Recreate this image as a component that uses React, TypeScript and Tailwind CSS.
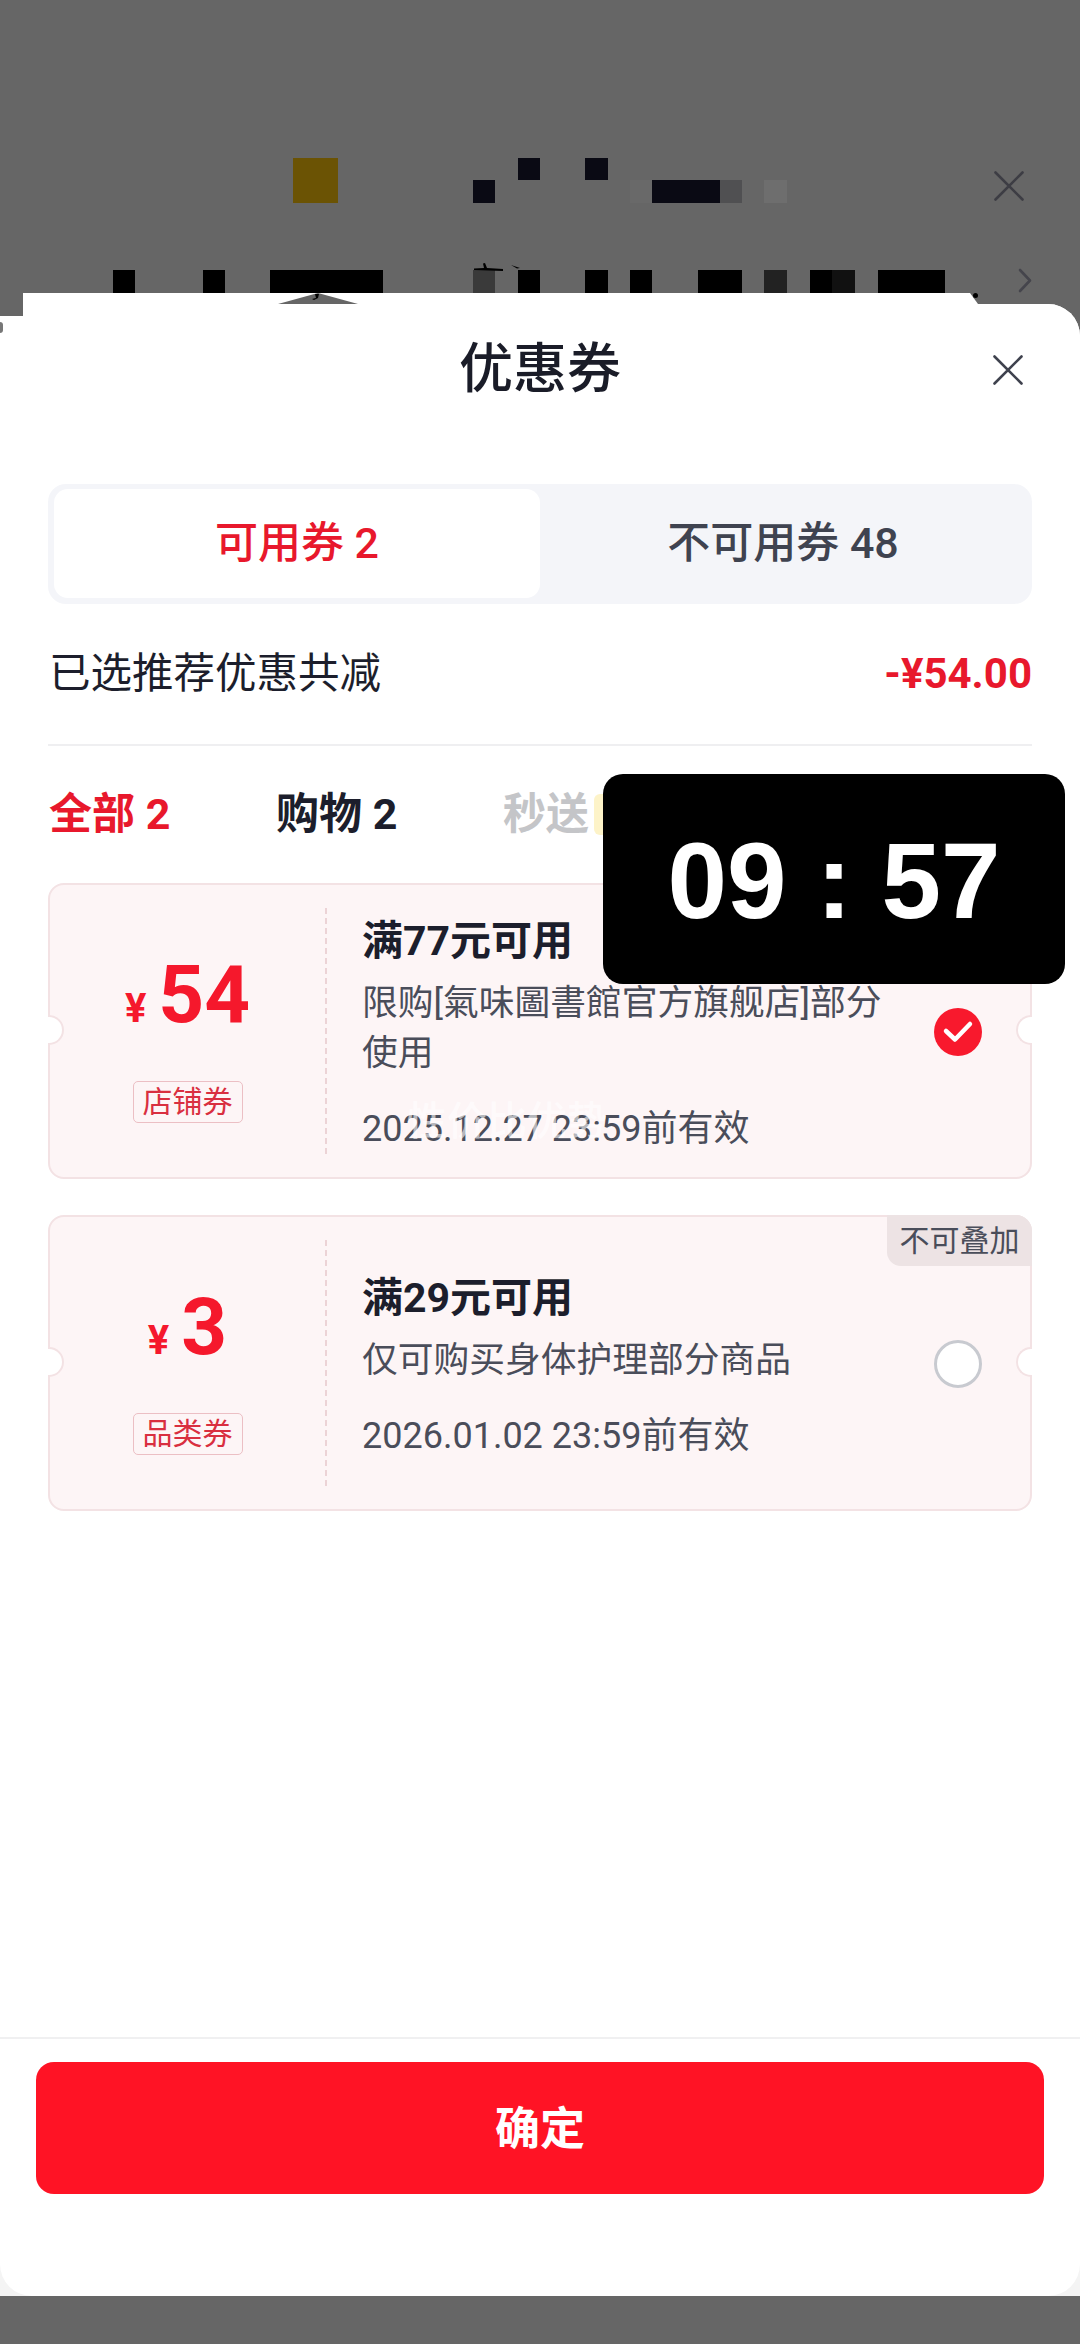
interface Coupon {
    id: string;
    amount: string;
    tag: string;
    title: string;
    lines: string[];
    expires: string;
    selected: boolean;
    noStack: boolean;
}

const coupons: Coupon[] = [
    {
        id: "1",
        amount: "54",
        tag: "店铺券",
        title: "满77元可用",
        lines: ["限购[氣味圖書館官方旗舰店]部分", "使用"],
        expires: "2025.12.27 23:59前有效",
        selected: true,
        noStack: false,
    },
    {
        id: "2",
        amount: "3",
        tag: "品类券",
        title: "满29元可用",
        lines: ["仅可购买身体护理部分商品"],
        expires: "2026.01.02 23:59前有效",
        selected: false,
        noStack: true,
    },
];

const CloseIcon = ({ color }: { color: string }) => (
    <svg width="30" height="30" viewBox="0 0 30 30" fill="none" stroke={color} strokeWidth="2.6" strokeLinecap="round">
        <path d="M1.5 1.5L28.5 28.5M28.5 1.5L1.5 28.5" />
    </svg>
);

const CouponCard = ({ coupon }: { coupon: Coupon }) => (
    <div className="relative flex h-[296px] rounded-[16px] border-2 border-[#f3e2e4] bg-[#fdf5f6]">
        {/* ticket notches */}
        <div className="absolute left-[-2px] top-[130px] h-[30px] w-[16px] rounded-r-full border-2 border-l-0 border-[#f3e2e4] bg-white"></div>
        <div className="absolute right-[-2px] top-[130px] h-[30px] w-[16px] rounded-l-full border-2 border-r-0 border-[#f3e2e4] bg-white"></div>

        {coupon.noStack && (
            <div className="absolute right-[-2px] top-[-2px] flex h-[51px] w-[145px] items-center justify-center rounded-bl-[14px] rounded-tr-[16px] bg-[#ede3e4] text-[30px] leading-none text-[#4a4d5a]">
                不可叠加
            </div>
        )}

        {/* Amount column */}
        <div className="flex w-[275px] flex-col items-center pt-[80px]">
            <div className="flex h-[96px] items-end gap-[12px] pb-[34px] font-bold leading-none text-[#f5182c]">
                <span className="text-[40px] leading-[36px]">¥</span>
                <span className="text-[80px] leading-[64px]">{coupon.amount}</span>
            </div>
            <div className="mt-[20px] flex h-[42px] w-[110px] items-center justify-center rounded-[5px] border border-[#ecbfc4] text-[30px] leading-none text-[#d92f40]">
                {coupon.tag}
            </div>
        </div>

        <div className="my-[23px] border-l-2 border-dashed border-[#ecd3d6]"></div>

        {/* Text column */}
        <div className="flex flex-1 flex-col justify-center pl-[35px] pt-[8px]">
            <div className="text-[41px] font-bold leading-[50px] text-[#1c1e2c]">{coupon.title}</div>
            <div className="mt-[12px] text-[35.75px] leading-[50px] text-[#4a4d5a]">
                {coupon.lines.map((line) => (
                    <div key={line}>{line}</div>
                ))}
            </div>
            <div className="mt-[26px] text-[36px] leading-[50px] text-[#4a4d5a]">{coupon.expires}</div>
        </div>

        {/* Radio */}
        <div className="mr-[48px] flex items-center pt-[2px]">
            {coupon.selected ? (
                <svg width="48" height="48" viewBox="0 0 48 48" fill="none">
                    <circle cx="24" cy="24" r="24" fill="#f8192d" />
                    <path d="M12 23L21 31.5L36 16" stroke="#fff" strokeWidth="4.5" strokeLinecap="round" strokeLinejoin="round" />
                </svg>
            ) : (
                <div className="h-[48px] w-[48px] rounded-full border-[3px] border-[#c8cad0] bg-white"></div>
            )}
        </div>
    </div>
);

export default function App() {
    return (
        <div className="relative flex h-[2344px] w-[1080px] flex-col overflow-hidden bg-[#666666] [font-family:Roboto,'Noto_Sans_CJK_SC',sans-serif]">
            {/* Mosaic page behind the sheet */}
            <div className="h-[293px] pt-[158px]">
                <div className="flex h-[45px] items-center">
                    <div className="w-[994px]">
                        <div className="flex h-[22px]">
                            <div className="ml-[293px] w-[45px] bg-[#6b5304]"></div>
                            <div className="ml-[180px] w-[22px] bg-[#0a0a14]"></div>
                            <div className="ml-[45px] w-[23px] bg-[#0a0a14]"></div>
                        </div>
                        <div className="flex h-[23px]">
                            <div className="ml-[293px] w-[45px] bg-[#6b5304]"></div>
                            <div className="ml-[135px] w-[22px] bg-[#0a0a14]"></div>
                            <div className="ml-[135px] w-[22px] bg-[#696969]"></div>
                            <div className="w-[68px] bg-[#0a0a14]"></div>
                            <div className="w-[22px] bg-[#505052]"></div>
                            <div className="ml-[22px] w-[23px] bg-[#6e6e6e]"></div>
                        </div>
                    </div>
                    <div className="mt-[10px]">
                        <CloseIcon color="#3d3d44" />
                    </div>
                </div>
                <div className="mt-[65px] flex h-[25px] items-end">
                    <div className="flex h-[23px] w-[1018px]">
                        <div className="ml-[113px] w-[22px] bg-black"></div>
                        <div className="ml-[68px] w-[22px] bg-black"></div>
                        <div className="ml-[45px] w-[113px] bg-black"></div>
                        <div className="ml-[90px] w-[22px] bg-[#3a3a3a]"></div>
                        <div className="ml-[23px] w-[22px] bg-black"></div>
                        <div className="ml-[45px] w-[23px] bg-black"></div>
                        <div className="ml-[22px] w-[22px] bg-black"></div>
                        <div className="ml-[46px] w-[44px] bg-black"></div>
                        <div className="ml-[22px] w-[23px] bg-[#222222]"></div>
                        <div className="ml-[23px] w-[22px] bg-black"></div>
                        <div className="w-[23px] bg-[#111111]"></div>
                        <div className="ml-[23px] w-[67px] bg-black"></div>
                    </div>
                    <svg width="14" height="25" viewBox="0 0 14 25" fill="none" stroke="#45454c" strokeWidth="2.6" strokeLinecap="round" strokeLinejoin="round">
                        <path d="M2 2L12 12.5L2 23" />
                    </svg>
                </div>
            </div>

            {/* Scraps of the page that stick out above the strip */}
            <svg className="absolute left-[470px] top-[262px]" width="60" height="12" viewBox="0 0 60 12" fill="#000">
                <path d="M4 6.5L14 6L13 1.5L15 1L17 6L33 7V9L4 8Z" />
                <path d="M41 3L50 6L47 6.5Z" />
            </svg>

            {/* White strip that sits on top of the sheet */}
            <div className="relative ml-[23px] h-[11px] w-[955px] bg-white [clip-path:polygon(0_0,947px_0,955px_100%,0_100%)]">
                <svg className="absolute left-[255px] top-0" width="82" height="11" viewBox="0 0 82 11">
                    <path d="M0 11L40 0L80 11Z" fill="#666666" />
                    <path d="M37 1H41L40 5L36 7L34 6L38 5Z" fill="#000" />
                </svg>
            </div>
            <div className="absolute left-[973px] top-[293px] h-[5px] w-[5px] rounded-full bg-black"></div>

            {/* Coupon sheet */}
            <div className="relative h-[1992px] rounded-tr-[32px] bg-[#f4f4f4]">
                <div className="flex h-full flex-col rounded-b-[32px] rounded-tr-[32px] bg-white">
                    <div className="absolute left-0 top-0 h-[12px] w-[23px] bg-[#666666]"></div>
                    <div className="absolute left-0 top-[18px] h-[11px] w-[3px] rounded-r-full bg-[#777777]"></div>

                    <div className="relative flex h-[132px] items-center justify-center">
                        <h1 className="text-[54px] font-medium leading-none text-[#1a1c28]">优惠券</h1>
                        <div className="absolute left-[993px] top-[51px]">
                            <CloseIcon color="#3f424e" />
                        </div>
                    </div>

                    <div className="mt-[48px] px-[48px]">
                        {/* Tabs */}
                        <div className="flex h-[120px] rounded-[18px] bg-[#f4f5f9] pb-[6px] pl-[6px] pt-[5px]">
                            <div className="flex w-[486px] items-center justify-center rounded-[14px] bg-white text-[43px] font-medium leading-none text-[#e8182c]">
                                可用券 2
                            </div>
                            <div className="flex flex-1 items-center justify-center pr-[6px] text-[43px] font-medium leading-none text-[#3f4350]">
                                不可用券 48
                            </div>
                        </div>

                        {/* Summary */}
                        <div className="flex h-[142px] items-center justify-between border-b-2 border-[#efeff1]">
                            <span className="pl-[1px] text-[41.5px] leading-none text-[#1c1e2c]">已选推荐优惠共减</span>
                            <span className="text-[42px] font-bold leading-none text-[#e8182c]">-¥54.00</span>
                        </div>

                        {/* Filters */}
                        <div className="flex h-[137px] items-center pl-[1px] text-[43px] font-bold leading-none">
                            <span className="w-[227px] text-[#e8182c]">全部 2</span>
                            <span className="w-[227px] text-[#1c1e2c]">购物 2</span>
                            <span className="text-[#c4c5c8]">秒送</span>
                            <span className="ml-[5px] h-[41px] w-[80px] rounded-[6px] bg-[#fdf3c8]"></span>
                        </div>

                        <div className="flex flex-col gap-[36px]">
                            {coupons.map((coupon) => (
                                <CouponCard key={coupon.id} coupon={coupon} />
                            ))}
                        </div>
                    </div>

                    {/* Footer */}
                    <div className="mt-auto border-t-2 border-[#f0f0f1] px-[36px] pb-[102px] pt-[23px]">
                        <div className="flex h-[132px] items-center justify-center rounded-[18px] bg-[#ff1325] pt-[2px] text-[45px] font-bold leading-none text-white">
                            确定
                        </div>
                    </div>
                </div>
            </div>

            {/* Timer badge and faint watermark on top of everything */}
            <div className="absolute left-[603px] top-[774px] flex h-[210px] w-[462px] items-center justify-center rounded-[20px] bg-black pt-[4px] text-[107px] font-bold leading-none text-white [font-family:'Liberation_Sans',sans-serif]">
                09 : 57
            </div>
            <div className="absolute left-[407px] top-[1102px] text-[40px] font-medium leading-none text-white/60">性价比优势</div>
        </div>
    );
}
